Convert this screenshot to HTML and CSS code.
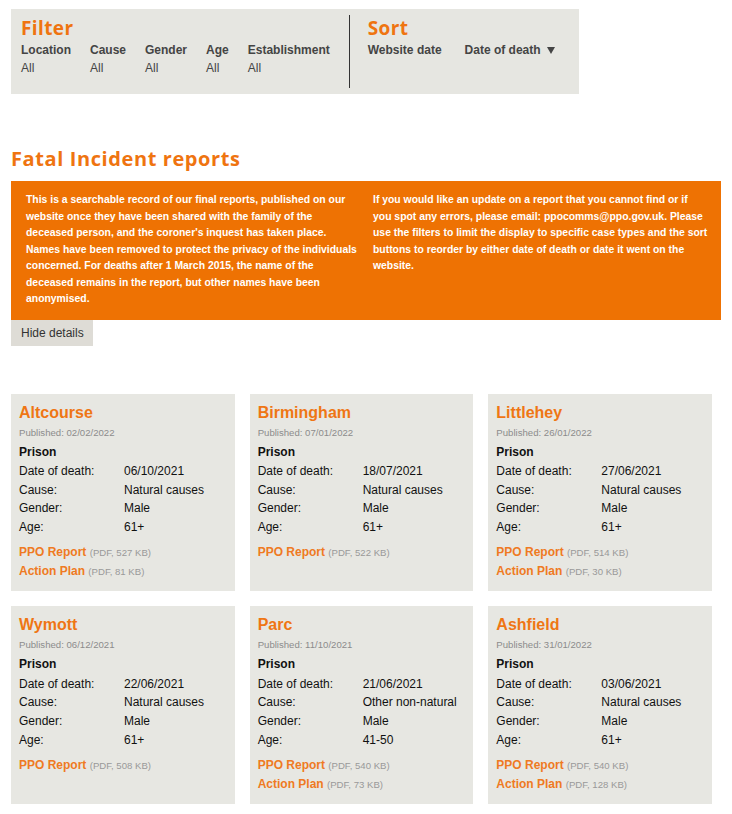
FILE: index.html
```html
<!DOCTYPE html>
<html lang="en">
<head>
<meta charset="utf-8">
<title>Fatal Incident reports</title>
<link rel="stylesheet" href="styles.css">
</head>
<body>
<div class="page">
  <div class="controls">
    <div class="filter">
      <h2 class="ctrl-title">Filter</h2>
      <div class="opts">
        <div class="opt"><div class="opt-label">Location</div><div class="opt-val">All</div></div>
        <div class="opt"><div class="opt-label">Cause</div><div class="opt-val">All</div></div>
        <div class="opt"><div class="opt-label">Gender</div><div class="opt-val">All</div></div>
        <div class="opt"><div class="opt-label">Age</div><div class="opt-val">All</div></div>
        <div class="opt"><div class="opt-label">Establishment</div><div class="opt-val">All</div></div>
      </div>
    </div>
    <div class="sort">
      <h2 class="ctrl-title">Sort</h2>
      <div class="opts sort-opts">
        <div class="opt-label">Website date</div>
        <div class="opt-label">Date of death <svg class="arrow" width="8" height="7" viewBox="0 0 8 7" aria-hidden="true"><polygon points="0,0 8,0 4,7" fill="#444444"/></svg></div>
      </div>
    </div>
  </div>

  <h1 class="page-title">Fatal Incident reports</h1>

  <div class="intro">
    <p>This is a searchable record of our final reports, published on our<br>
    website once they have been shared with the family of the<br>
    deceased person, and the coroner's inquest has taken place.<br>
    Names have been removed to protect the privacy of the individuals<br>
    concerned. For deaths after 1 March 2015, the name of the<br>
    deceased remains in the report, but other names have been<br>
    anonymised.</p>
    <p>If you would like an update on a report that you cannot find or if<br>
    you spot any errors, please email: ppocomms@ppo.gov.uk. Please<br>
    use the filters to limit the display to specific case types and the sort<br>
    buttons to reorder by either date of death or date it went on the<br>
    website.</p>
  </div>
  <button class="hide-btn" type="button">Hide details</button>

  <div class="cards">
    <div class="card">
      <h3 class="card-title">Altcourse</h3>
      <div class="pub">Published: 02/02/2022</div>
      <div class="type">Prison</div>
      <div class="facts">
        <span>Date of death:</span><span>06/10/2021</span>
        <span>Cause:</span><span>Natural causes</span>
        <span>Gender:</span><span>Male</span>
        <span>Age:</span><span>61+</span>
      </div>
      <div class="links">
        <div><a class="doc" href="#">PPO Report</a> <span class="size">(PDF, 527 KB)</span></div>
        <div><a class="doc" href="#">Action Plan</a> <span class="size">(PDF, 81 KB)</span></div>
      </div>
    </div>
    <div class="card">
      <h3 class="card-title">Birmingham</h3>
      <div class="pub">Published: 07/01/2022</div>
      <div class="type">Prison</div>
      <div class="facts">
        <span>Date of death:</span><span>18/07/2021</span>
        <span>Cause:</span><span>Natural causes</span>
        <span>Gender:</span><span>Male</span>
        <span>Age:</span><span>61+</span>
      </div>
      <div class="links">
        <div><a class="doc" href="#">PPO Report</a> <span class="size">(PDF, 522 KB)</span></div>
      </div>
    </div>
    <div class="card">
      <h3 class="card-title">Littlehey</h3>
      <div class="pub">Published: 26/01/2022</div>
      <div class="type">Prison</div>
      <div class="facts">
        <span>Date of death:</span><span>27/06/2021</span>
        <span>Cause:</span><span>Natural causes</span>
        <span>Gender:</span><span>Male</span>
        <span>Age:</span><span>61+</span>
      </div>
      <div class="links">
        <div><a class="doc" href="#">PPO Report</a> <span class="size">(PDF, 514 KB)</span></div>
        <div><a class="doc" href="#">Action Plan</a> <span class="size">(PDF, 30 KB)</span></div>
      </div>
    </div>
    <div class="card">
      <h3 class="card-title">Wymott</h3>
      <div class="pub">Published: 06/12/2021</div>
      <div class="type">Prison</div>
      <div class="facts">
        <span>Date of death:</span><span>22/06/2021</span>
        <span>Cause:</span><span>Natural causes</span>
        <span>Gender:</span><span>Male</span>
        <span>Age:</span><span>61+</span>
      </div>
      <div class="links">
        <div><a class="doc" href="#">PPO Report</a> <span class="size">(PDF, 508 KB)</span></div>
      </div>
    </div>
    <div class="card">
      <h3 class="card-title">Parc</h3>
      <div class="pub">Published: 11/10/2021</div>
      <div class="type">Prison</div>
      <div class="facts">
        <span>Date of death:</span><span>21/06/2021</span>
        <span>Cause:</span><span>Other non-natural</span>
        <span>Gender:</span><span>Male</span>
        <span>Age:</span><span>41-50</span>
      </div>
      <div class="links">
        <div><a class="doc" href="#">PPO Report</a> <span class="size">(PDF, 540 KB)</span></div>
        <div><a class="doc" href="#">Action Plan</a> <span class="size">(PDF, 73 KB)</span></div>
      </div>
    </div>
    <div class="card">
      <h3 class="card-title">Ashfield</h3>
      <div class="pub">Published: 31/01/2022</div>
      <div class="type">Prison</div>
      <div class="facts">
        <span>Date of death:</span><span>03/06/2021</span>
        <span>Cause:</span><span>Natural causes</span>
        <span>Gender:</span><span>Male</span>
        <span>Age:</span><span>61+</span>
      </div>
      <div class="links">
        <div><a class="doc" href="#">PPO Report</a> <span class="size">(PDF, 540 KB)</span></div>
        <div><a class="doc" href="#">Action Plan</a> <span class="size">(PDF, 128 KB)</span></div>
      </div>
    </div>
  </div>
</div>
</body>
</html>
```

FILE: styles.css
```css
body {
  margin: 0;
  background: #ffffff;
  font-family: "Liberation Sans", Arial, sans-serif;
  color: #111111;
}

.page {
  width: 710px;
  padding: 9px 11px;
}

/* Filter / sort panel */
.controls {
  display: flex;
  box-sizing: border-box;
  width: 568px;
  height: 85px;
  padding: 6px 0;
  background: #e6e6e1;
}

.filter {
  padding: 0 19px 0 10px;
}

.sort {
  border-left: 1px solid #333333;
  padding-left: 18px;
}

.ctrl-title {
  margin: 0;
  font-family: "Open Sans", sans-serif;
  font-weight: 700;
  font-size: 19px;
  line-height: 26px;
  letter-spacing: 0.4px;
  color: #ef7410;
}

.opts {
  display: flex;
  gap: 19px;
}

.sort-opts {
  gap: 23px;
}

.opt-label {
  font-weight: 700;
  font-size: 12px;
  line-height: 18px;
  color: #444444;
}

.opt-val {
  font-size: 12px;
  line-height: 18px;
  color: #444444;
}

.arrow {
  margin-left: 3px;
  vertical-align: 0;
}

/* Page heading */
.page-title {
  margin: 52px 0 9px;
  font-family: "Open Sans", sans-serif;
  font-weight: 700;
  font-size: 20px;
  line-height: 26px;
  letter-spacing: 0.6px;
  color: #ef7410;
}

/* Intro box */
.intro {
  display: grid;
  grid-template-columns: 340px 338px;
  column-gap: 7px;
  padding: 11px 10px 12px 15px;
  background: #ee7203;
  color: #ffffff;
  font-weight: 700;
  font-size: 10.4px;
  line-height: 16.5px;
}

.intro p {
  margin: 0;
}

.hide-btn {
  display: block;
  height: 26px;
  padding: 0 9px 0 10px;
  border: none;
  background: #dedcd6;
  font-family: "Liberation Sans", Arial, sans-serif;
  font-size: 12px;
  color: #333333;
}

/* Report cards */
.cards {
  display: grid;
  grid-template-columns: repeat(3, 1fr);
  gap: 15px;
  width: 701px;
  margin-top: 48px;
}

.card {
  padding: 9px 8px 10px;
  background: #e7e7e2;
}

.card-title {
  margin: 0 0 3px;
  font-size: 16px;
  line-height: 20px;
  font-weight: 700;
  color: #ef7614;
}

.pub {
  margin-bottom: 4px;
  font-size: 9.6px;
  line-height: 13px;
  color: #8c8c8c;
}

.type {
  margin-bottom: 1px;
  font-weight: 700;
  font-size: 12px;
  line-height: 18.5px;
}

.facts {
  display: grid;
  grid-template-columns: 105px 1fr;
  font-size: 12px;
  line-height: 18.6px;
}

.links {
  margin-top: 7px;
  font-size: 12px;
  line-height: 19px;
}

.doc {
  font-weight: 700;
  font-size: 12px;
  color: #ef7a22;
  text-decoration: none;
}

.size {
  font-size: 9.6px;
  color: #999999;
}
```
